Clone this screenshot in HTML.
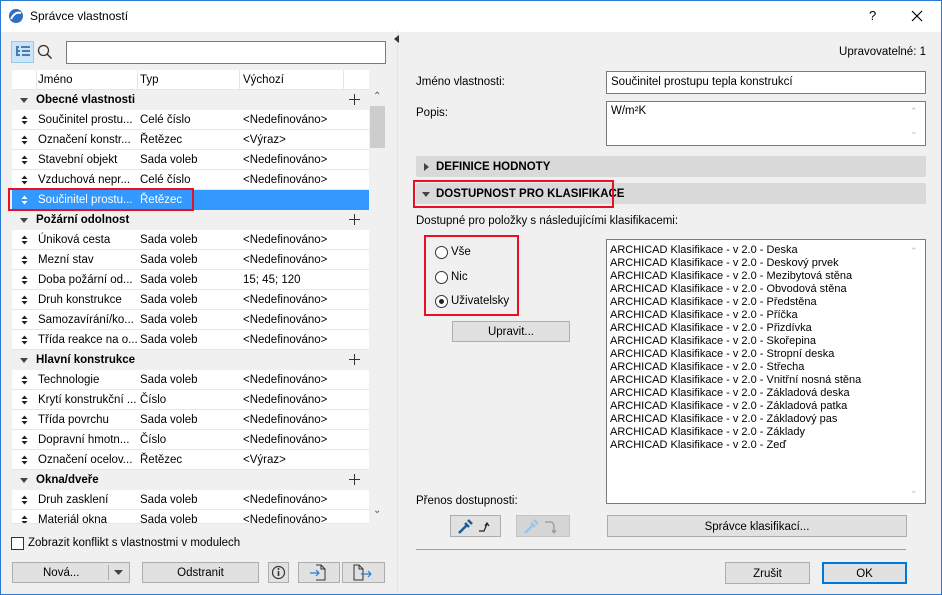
<!DOCTYPE html>
<html><head><meta charset="utf-8"><style>
*{box-sizing:border-box;margin:0;padding:0}
body{width:942px;height:595px;overflow:hidden;background:#fff;font-family:"Liberation Sans",sans-serif;font-size:11.5px;color:#000;position:relative}
.a{position:absolute;white-space:nowrap}
.win{position:absolute;left:0;top:0;width:942px;height:595px;border:1px solid #2b79d0;background:#f0f0f0}
.tb{position:absolute;left:0;top:0;width:940px;height:31px;background:#fff}
.row{position:absolute;left:12px;width:357px;height:20px;background:#fff;border-bottom:1px solid #e6e6e6}
.grp{background:#f0f0f0;border-bottom:none}
.row span{position:absolute;top:4px}
.btn{position:absolute;background:#e1e1e1;border:1px solid #adadad;text-align:center;line-height:21px;padding-top:2px}
.inp{position:absolute;background:#fff;border:1px solid #7a7a7a}
.bar{position:absolute;left:416px;width:510px;height:21px;background:#d9d9d9;border-radius:2px;font-weight:bold;line-height:23px;padding-left:20px}
.red{position:absolute;border:2px solid #e81123}
.rad{position:absolute;width:13px;height:13px;border:1px solid #333;border-radius:50%;background:#fff}
</style></head><body>
<div class="win">
<div class="tb"></div>
</div>
<svg class="a" style="left:8px;top:8px" width="16" height="16"><circle cx="8" cy="8" r="7" fill="#2d6fc2"/><path d="M3 11 Q7 3 13 5" stroke="#fff" stroke-width="2" fill="none"/></svg>
<div class="a" style="left:30px;top:9px;font-size:12px">Správce vlastností</div>
<div class="a" style="left:869px;top:8px;font-size:13px">?</div>
<svg class="a" style="left:911px;top:10px" width="12" height="12"><path d="M1 1L11 11M11 1L1 11" stroke="#000" stroke-width="1.2"/></svg>

<div class="a" style="left:11px;top:41px;width:23px;height:22px;background:#cce4f7;border:1px solid #99c9ef"></div>
<svg class="a" style="left:15px;top:45px" width="16" height="14"><path d="M1 2h3M6 2h9M3 6h2M7 6h8M3 10h2M7 10h8M2 3v8" stroke="#1e5b96" stroke-width="1.5"/></svg>
<svg class="a" style="left:37px;top:44px" width="16" height="16"><circle cx="6.5" cy="6.5" r="5" stroke="#333" fill="none" stroke-width="1.3"/><path d="M10 10l4.5 4.5" stroke="#333" stroke-width="1.5"/></svg>
<div class="inp" style="left:66px;top:41px;width:320px;height:23px;border-color:#7a7a7a"></div>

<div class="a" style="left:12px;top:70px;width:357px;height:20px;background:#fff;border-bottom:1px solid #e6e6e6"></div>
<div class="a" style="left:36px;top:70px;width:1px;height:20px;background:#e6e6e6"></div>
<div class="a" style="left:137px;top:70px;width:1px;height:20px;background:#e6e6e6"></div>
<div class="a" style="left:239px;top:70px;width:1px;height:20px;background:#e6e6e6"></div>
<div class="a" style="left:343px;top:70px;width:1px;height:20px;background:#e6e6e6"></div>
<div class="a" style="left:38px;top:74px">Jméno</div>
<div class="a" style="left:140px;top:74px">Typ</div>
<div class="a" style="left:243px;top:74px">Výchozí</div>
<div class="a" style="left:369px;top:90px;width:17px;height:434px;background:#f0f0f0"></div>
<div class="a" style="left:370px;top:106px;width:15px;height:42px;background:#cdcdcd"></div>
<div class="a" style="left:373px;top:91px;font-size:10px;color:#555">&#8963;</div>
<div class="a" style="left:373px;top:505px;font-size:10px;color:#555">&#8964;</div>

<div id="rows"></div>
<script>
var d=[
['g','Obecné vlastnosti'],
['Součinitel prostu...','Celé číslo','<Nedefinováno>'],
['Označení konstr...','Řetězec','<Výraz>'],
['Stavební objekt','Sada voleb','<Nedefinováno>'],
['Vzduchová nepr...','Celé číslo','<Nedefinováno>'],
['s','Součinitel prostu...','Řetězec'],
['g','Požární odolnost'],
['Úniková cesta','Sada voleb','<Nedefinováno>'],
['Mezní stav','Sada voleb','<Nedefinováno>'],
['Doba požární od...','Sada voleb','15; 45; 120'],
['Druh konstrukce','Sada voleb','<Nedefinováno>'],
['Samozavírání/ko...','Sada voleb','<Nedefinováno>'],
['Třída reakce na o...','Sada voleb','<Nedefinováno>'],
['g','Hlavní konstrukce'],
['Technologie','Sada voleb','<Nedefinováno>'],
['Krytí konstrukční ...','Číslo','<Nedefinováno>'],
['Třída povrchu','Sada voleb','<Nedefinováno>'],
['Dopravní hmotn...','Číslo','<Nedefinováno>'],
['Označení ocelov...','Řetězec','<Výraz>'],
['g','Okna/dveře'],
['Druh zasklení','Sada voleb','<Nedefinováno>'],
['Materiál okna','Sada voleb','<Nedefinováno>']];
var h='';
function e(s){return s.replace(/</g,'&lt;').replace(/>/g,'&gt;')}
var arr='<svg style="position:absolute;left:9px;top:5px" width="7" height="10"><path d="M0.5 4L3.5 0.5L6.5 4Z M0.5 6L3.5 9.5L6.5 6Z" fill="#222"/></svg>';
d.forEach(function(r,i){var t=90+i*20;var hh=t+20>524?524-t:20;
if(r[0]=='g'){h+='<div class="row grp" style="top:'+t+'px;height:'+hh+'px"><svg style="position:absolute;left:8px;top:8px" width="8" height="5"><path d="M0 0H8L4 5Z" fill="#444"/></svg><span style="left:24px;font-weight:bold">'+e(r[1])+'</span><svg style="position:absolute;left:337px;top:4px" width="11" height="11"><path d="M5.5 0v11M0 5.5h11" stroke="#333" stroke-width="1"/></svg></div>';}
else if(r[0]=='s'){h+='<div class="row" style="top:'+t+'px;background:#3399ff;color:#fff;border-bottom:none">'+arr.replace('#222','#fff')+'<span style="left:26px">'+r[1]+'</span><span style="left:128px">'+r[2]+'</span></div>';}
else{h+='<div class="row" style="top:'+t+'px;height:'+hh+'px;overflow:hidden">'+arr+'<span style="left:26px">'+e(r[0])+'</span><span style="left:128px">'+e(r[1])+'</span><span style="left:231px">'+e(r[2])+'</span></div>';}
});
document.getElementById('rows').innerHTML=h;
</script>
<div class="red" style="left:8px;top:188px;width:186px;height:23px"></div>

<div class="a" style="left:11px;top:537px;width:13px;height:13px;border:1px solid #333;background:#fff"></div>
<div class="a" style="left:28px;top:537px">Zobrazit konflikt s vlastnostmi v modulech</div>
<div class="btn" style="left:12px;top:562px;width:118px;height:21px;text-align:left;padding-left:30px;line-height:17px">Nová...</div>
<div class="a" style="left:108px;top:565px;width:1px;height:15px;background:#adadad"></div>
<svg class="a" style="left:114px;top:570px" width="9" height="5"><path d="M0 0H9L4.5 5Z" fill="#444"/></svg>
<div class="btn" style="left:142px;top:562px;width:117px;height:21px;line-height:17px">Odstranit</div>
<div class="btn" style="left:268px;top:562px;width:21px;height:21px"></div>
<svg class="a" style="left:271px;top:565px" width="15" height="15"><circle cx="7.5" cy="7.5" r="6" stroke="#333" fill="none" stroke-width="1.2"/><path d="M7.5 6v5" stroke="#333" stroke-width="1.6"/><circle cx="7.5" cy="4" r="1" fill="#333"/></svg>
<div class="btn" style="left:298px;top:562px;width:42px;height:21px"></div>
<svg class="a" style="left:308px;top:564px" width="20" height="17"><path d="M8 1h5l4 4v11H8" stroke="#333" fill="none"/><path d="M13 1v4h4" stroke="#333" fill="none"/><path d="M2 9h9M8 6l3 3-3 3" stroke="#2b7cd3" fill="none" stroke-width="1.2"/></svg>
<div class="btn" style="left:342px;top:562px;width:43px;height:21px"></div>
<svg class="a" style="left:352px;top:564px" width="22" height="17"><path d="M2 1h5l4 4v11H2z" stroke="#333" fill="none"/><path d="M7 1v4h4" stroke="#333" fill="none"/><path d="M9 10h10M16 7l3 3-3 3" stroke="#2b7cd3" fill="none" stroke-width="1.2"/></svg>

<div class="a" style="left:397px;top:31px;width:1px;height:563px;background:#e3e3e3"></div>
<svg class="a" style="left:394px;top:35px" width="5" height="8"><path d="M5 0V8L0 4Z" fill="#333"/></svg>

<div class="a" style="left:820px;top:46px;width:106px;text-align:right">Upravovatelné: 1</div>
<div class="a" style="left:416px;top:76px">Jméno vlastnosti:</div>
<div class="inp" style="left:606px;top:71px;width:320px;height:23px"></div>
<div class="a" style="left:611px;top:76px">Součinitel prostupu tepla konstrukcí</div>
<div class="a" style="left:416px;top:107px">Popis:</div>
<div class="inp" style="left:606px;top:101px;width:320px;height:45px"></div>
<div class="a" style="left:611px;top:105px">W/m²K</div>
<div class="a" style="left:910px;top:106px;font-size:9px;color:#bbb">&#8963;</div>
<div class="a" style="left:910px;top:126px;font-size:9px;color:#bbb">&#8964;</div>
<div class="bar" style="top:156px">DEFINICE HODNOTY</div>
<svg class="a" style="left:424px;top:163px" width="5" height="8"><path d="M0 0L5 4L0 8Z" fill="#444"/></svg>
<div class="bar" style="top:183px">DOSTUPNOST PRO KLASIFIKACE</div>
<svg class="a" style="left:422px;top:192px" width="8" height="5"><path d="M0 0H8L4 5Z" fill="#444"/></svg>
<div class="red" style="left:413px;top:180px;width:201px;height:28px"></div>
<div class="a" style="left:416px;top:215px">Dostupné pro položky s následujícími klasifikacemi:</div>
<div class="red" style="left:424px;top:235px;width:95px;height:81px"></div>
<div class="rad" style="left:435px;top:246px"></div><div class="a" style="left:451px;top:246px">Vše</div>
<div class="rad" style="left:435px;top:271px"></div><div class="a" style="left:451px;top:271px">Nic</div>
<div class="rad" style="left:435px;top:295px"></div><div class="a" style="left:439px;top:299px;width:5px;height:5px;border-radius:50%;background:#222"></div><div class="a" style="left:451px;top:295px">Uživatelsky</div>
<div class="btn" style="left:452px;top:321px;width:118px;height:21px;line-height:17px">Upravit...</div>
<div class="inp" style="left:606px;top:239px;width:320px;height:265px"></div>
<div class="a" style="left:910px;top:246px;font-size:9px;color:#bbb">&#8963;</div>
<div class="a" style="left:910px;top:485px;font-size:9px;color:#bbb">&#8964;</div>
<div class="a" style="left:610px;top:244px;line-height:13px;font-size:11px">ARCHICAD Klasifikace - v 2.0 - Deska<br>ARCHICAD Klasifikace - v 2.0 - Deskový prvek<br>ARCHICAD Klasifikace - v 2.0 - Mezibytová stěna<br>ARCHICAD Klasifikace - v 2.0 - Obvodová stěna<br>ARCHICAD Klasifikace - v 2.0 - Předstěna<br>ARCHICAD Klasifikace - v 2.0 - Příčka<br>ARCHICAD Klasifikace - v 2.0 - Přizdívka<br>ARCHICAD Klasifikace - v 2.0 - Skořepina<br>ARCHICAD Klasifikace - v 2.0 - Stropní deska<br>ARCHICAD Klasifikace - v 2.0 - Střecha<br>ARCHICAD Klasifikace - v 2.0 - Vnitřní nosná stěna<br>ARCHICAD Klasifikace - v 2.0 - Základová deska<br>ARCHICAD Klasifikace - v 2.0 - Základová patka<br>ARCHICAD Klasifikace - v 2.0 - Základový pas<br>ARCHICAD Klasifikace - v 2.0 - Základy<br>ARCHICAD Klasifikace - v 2.0 - Zeď</div>
<div class="a" style="left:416px;top:495px">Přenos dostupnosti:</div>
<div class="btn" style="left:450px;top:515px;width:51px;height:22px"></div>
<svg class="a" style="left:457px;top:517px" width="40" height="18"><path d="M2 16L10 8M8 6l4 4M11 3l4 4" stroke="#1e5b96" stroke-width="2.5" fill="none"/><path d="M22 14h5l3-7M28 9l2-3 2 3" stroke="#222" fill="none" stroke-width="1.2"/></svg>
<div class="btn" style="left:516px;top:515px;width:54px;height:22px;background:#d5d5d5;border-color:#c5c5c5"></div>
<svg class="a" style="left:523px;top:517px" width="40" height="18"><path d="M2 16L10 8M8 6l4 4M11 3l4 4" stroke="#9cc3e8" stroke-width="2.5" fill="none"/><path d="M22 5h5q4 0 4 5v5M29 13l2 3 2-3" stroke="#999" fill="none" stroke-width="1.2"/></svg>
<div class="btn" style="left:607px;top:515px;width:300px;height:22px;line-height:18px">Správce klasifikací...</div>
<div class="a" style="left:416px;top:549px;width:490px;height:1px;background:#a0a0a0"></div>
<div class="btn" style="left:725px;top:562px;width:85px;height:22px;line-height:18px">Zrušit</div>
<div class="btn" style="left:822px;top:562px;width:85px;height:22px;border:2px solid #0078d7;line-height:16px">OK</div>
</body></html>
